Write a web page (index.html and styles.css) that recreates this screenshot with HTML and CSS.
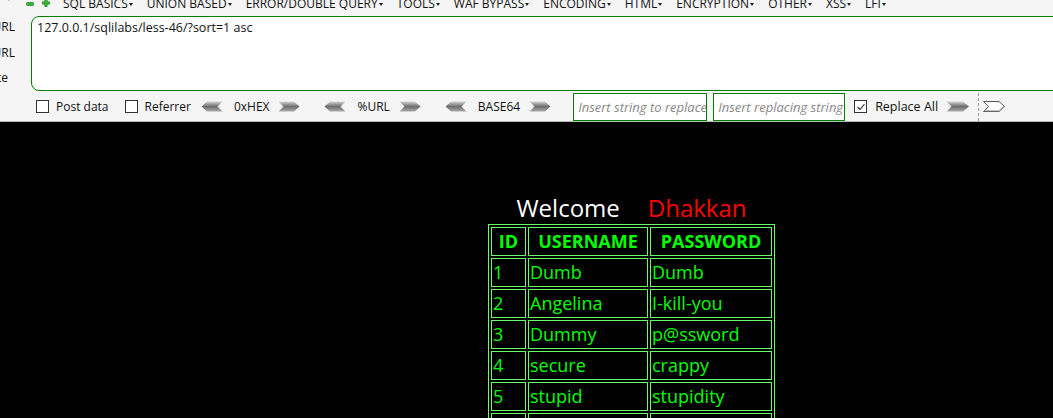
FILE: index.html
```html
<!DOCTYPE html>
<html>
<head>
<meta charset="utf-8">
<link rel="stylesheet" href="styles.css">
</head>
<body>
<div class="hackbar">
  <div class="menubar">
    <svg class="chev" width="10" height="8" viewBox="0 0 10 8"><polyline points="1,0 5,4 9,0" fill="none" stroke="#777" stroke-width="1.2"/></svg>
    <svg class="ico-minus" width="8" height="8" viewBox="0 0 8 8"><rect x="0.5" y="2.5" width="7" height="3" rx="1" fill="#3cb43c" stroke="#1e8a1e" stroke-width="0.8"/></svg>
    <svg class="ico-plus" width="8" height="8" viewBox="0 0 8 8"><path d="M2.8 0.5h2.4v2.3h2.3v2.4H5.2v2.3H2.8V5.2H0.5V2.8h2.3z" fill="#3cb43c" stroke="#1e8a1e" stroke-width="0.7"/></svg>
    <ul class="menu">
      <li>SQL BASICS<i class="caret"></i></li>
      <li>UNION BASED<i class="caret"></i></li>
      <li>ERROR/DOUBLE QUERY<i class="caret"></i></li>
      <li>TOOLS<i class="caret"></i></li>
      <li>WAF BYPASS<i class="caret"></i></li>
      <li>ENCODING<i class="caret"></i></li>
      <li>HTML<i class="caret"></i></li>
      <li>ENCRYPTION<i class="caret"></i></li>
      <li>OTHER<i class="caret"></i></li>
      <li>XSS<i class="caret"></i></li>
      <li>LFI<i class="caret"></i></li>
    </ul>
  </div>
  <div class="main">
    <div class="labels">
      <div class="lbl"><span>Load URL</span></div>
      <div class="lbl"><span>Split URL</span></div>
      <div class="lbl lbl-exec"><span>Execute</span></div>
    </div>
    <div class="urlbox">127.0.0.1/sqlilabs/less-46/?sort=1 asc</div>
  </div>
  <div class="tools">
    <label class="chk"><span class="box"></span>Post data</label>
    <label class="chk"><span class="box"></span>Referrer</label>
    <div class="enc">
      <svg class="arr" width="22" height="11" viewBox="0 0 22 11"><defs><linearGradient id="g1" x1="0" y1="0" x2="0" y2="1"><stop offset="0" stop-color="#d4d4d4"/><stop offset="0.5" stop-color="#6e6e6e"/><stop offset="1" stop-color="#a8a8a8"/></linearGradient></defs><polygon points="6,0.5 21.5,0.5 16.5,5.5 21.5,10.5 6,10.5 0.5,5.5" fill="url(#g1)"/></svg>
      <span class="enc-t">0xHEX</span>
      <svg class="arr" width="22" height="11" viewBox="0 0 22 11"><polygon points="0.5,0.5 16,0.5 21.5,5.5 16,10.5 0.5,10.5 5.5,5.5" fill="url(#g1)"/></svg>
    </div>
    <div class="enc">
      <svg class="arr" width="22" height="11" viewBox="0 0 22 11"><polygon points="6,0.5 21.5,0.5 16.5,5.5 21.5,10.5 6,10.5 0.5,5.5" fill="url(#g1)"/></svg>
      <span class="enc-t">%URL</span>
      <svg class="arr" width="22" height="11" viewBox="0 0 22 11"><polygon points="0.5,0.5 16,0.5 21.5,5.5 16,10.5 0.5,10.5 5.5,5.5" fill="url(#g1)"/></svg>
    </div>
    <div class="enc">
      <svg class="arr" width="22" height="11" viewBox="0 0 22 11"><polygon points="6,0.5 21.5,0.5 16.5,5.5 21.5,10.5 6,10.5 0.5,5.5" fill="url(#g1)"/></svg>
      <span class="enc-t">BASE64</span>
      <svg class="arr" width="22" height="11" viewBox="0 0 22 11"><polygon points="0.5,0.5 16,0.5 21.5,5.5 16,10.5 0.5,10.5 5.5,5.5" fill="url(#g1)"/></svg>
    </div>
    <div class="repl">
      <div class="inp inp1">Insert string to replace</div>
      <div class="inp inp2">Insert replacing string</div>
    </div>
    <label class="chk checked"><span class="box"><svg width="10" height="10" viewBox="0 0 10 10"><polyline points="1.5,5 4,7.5 8.5,2" fill="none" stroke="#222" stroke-width="1.1"/></svg></span>Replace All</label>
    <svg class="arr go" width="24" height="11" viewBox="0 0 24 11"><polygon points="0.5,0.5 17,0.5 23,5.5 17,10.5 0.5,10.5 5.5,5.5" fill="url(#g1)"/></svg>
    <span class="sep"></span>
    <svg class="arr" width="22" height="11" viewBox="0 0 22 11"><polygon points="0.5,0.5 16,0.5 21.5,5.5 16,10.5 0.5,10.5 5.5,5.5" fill="#fff" stroke="#444" stroke-width="0.9"/><polyline points="1.5,9.8 16,9.8 20.5,5.6" fill="none" stroke="#999" stroke-width="0.8"/></svg>
  </div>
</div>
<div class="page">
  <div class="content">
    <div class="welcome"><span class="w">Welcome</span><span class="name">Dhakkan</span></div>
    <table class="users">
      <tr><th class="c-id">ID</th><th class="c-user">USERNAME</th><th class="c-pass">PASSWORD</th></tr>
      <tr><td>1</td><td>Dumb</td><td>Dumb</td></tr>
      <tr><td>2</td><td>Angelina</td><td>I-kill-you</td></tr>
      <tr><td>3</td><td>Dummy</td><td>p@ssword</td></tr>
      <tr><td>4</td><td>secure</td><td>crappy</td></tr>
      <tr><td>5</td><td>stupid</td><td>stupidity</td></tr>
      <tr><td>6</td><td>superman</td><td>genious</td></tr>
      <tr><td>7</td><td>batman</td><td>mob!le</td></tr>
    </table>
  </div>
</div>
</body>
</html>
```

FILE: styles.css
```css
html, body {
  margin: 0;
  padding: 0;
  height: 100%;
  overflow: hidden;
}
body {
  background: #000;
  font-family: "Open Sans", "Noto Sans", sans-serif;
}
.hackbar {
  background: #f5f5f5;
  border-bottom: 1px solid #b8b8b8;
  color: #111;
  font-size: 12px;
}
.menubar {
  height: 16px;
  overflow: hidden;
  display: flex;
  align-items: flex-start;
}
.chev {
  margin: -4px 0 0 4px;
}
.ico-minus {
  margin: 0 0 0 12px;
}
.ico-plus {
  margin: -1px 0 0 8px;
}
.menu {
  list-style: none;
  margin: -4px 0 0 13px;
  padding: 0;
  display: flex;
  gap: 14px;
  line-height: 16px;
}
.menu li {
  display: flex;
  align-items: center;
  white-space: nowrap;
}
.caret {
  display: inline-block;
  width: 0;
  height: 0;
  border-left: 2px solid transparent;
  border-right: 2px solid transparent;
  border-top: 3px solid #222;
  margin-left: 1px;
}
.main {
  display: flex;
  height: 75px;
  overflow: hidden;
}
.labels {
  width: 15px;
  margin-right: 16px;
  overflow: hidden;
  padding-top: 1px;
  flex: none;
  font-size: 12px;
}
.lbl {
  display: flex;
  justify-content: flex-end;
  height: 25.5px;
  line-height: 20px;
  white-space: nowrap;
}
.lbl span {
  flex: none;
}
.lbl-exec {
  padding-right: 7px;
}
.urlbox {
  flex: none;
  width: 1040px;
  border: 1px solid #008000;
  border-radius: 8px 0 0 8px;
  background: #fff;
  padding: 4px 5px;
  line-height: 14px;
  font-size: 12.5px;
  box-sizing: border-box;
  height: 75px;
}
.tools {
  height: 30px;
  display: flex;
  align-items: center;
  padding-left: 36px;
  padding-top: 1px;
  box-sizing: border-box;
}
.chk {
  display: flex;
  align-items: center;
  white-space: nowrap;
  margin-right: 16px;
}
.chk + .chk {
  margin-right: 10px;
}
.box {
  width: 11px;
  height: 11px;
  border: 1px solid #333;
  background: #fff;
  margin-right: 7px;
  display: flex;
  align-items: center;
  justify-content: center;
}
.enc {
  display: flex;
  align-items: center;
  margin-right: 24px;
}
.enc-t {
  margin: 0 9px 0 11px;
}
.arr {
  display: block;
}
.repl {
  display: flex;
  gap: 6px;
  margin-left: -2px;
  margin-right: 9px;
}
.inp {
  height: 26px;
  border: 1px solid #008000;
  background: #fff;
  color: #888;
  font-style: italic;
  font-size: 13px;
  line-height: 26px;
  padding-left: 4px;
  white-space: nowrap;
  overflow: hidden;
}
.inp1 { width: 128px; }
.inp2 { width: 126px; }
.chk.checked {
  margin-right: 8px;
  font-size: 12.5px;
}
.checked .box {
  margin-right: 8px;
}
.sep {
  height: 28px;
  border-left: 1px dashed #999;
  margin: 0 4px 0 8px;
}
.page {
  background: #000;
}
.content {
  padding: 72px 0 0 210px;
  display: flex;
  flex-direction: column;
  align-items: center;
}
.welcome {
  font-size: 24px;
  line-height: 28px;
  display: flex;
  gap: 28px;
  margin-bottom: 2px;
}
.w { color: #fff; }
.name { color: #ff0000; }
.users {
  border: 1px solid #6f6;
  border-spacing: 2px;
  color: #00ff00;
  font-size: 18px;
}
.users th, .users td {
  border: 1px solid #6f6;
  padding: 0 1px;
  height: 27px;
  line-height: 27px;
  text-align: left;
  white-space: nowrap;
}
.users th {
  text-align: center;
  font-weight: bold;
}
.c-id { width: 31px; }
.c-user { width: 116px; }
.c-pass { width: 118px; }
```
